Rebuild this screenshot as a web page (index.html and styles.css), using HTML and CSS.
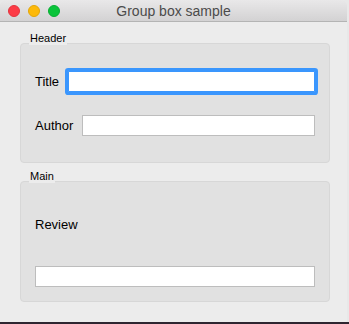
FILE: index.html
```html
<!DOCTYPE html>
<html lang="en">

<head>
  <meta charset="UTF-8">
  <title>Group box sample</title>
  <link rel="stylesheet" href="styles.css">
</head>

<body>
  <div class="window">
    <div class="titlebar">
      <div class="lights">
        <span class="light red"></span>
        <span class="light yellow"></span>
        <span class="light green"></span>
      </div>
      <div class="title">Group box sample</div>
    </div>

    <div class="content">
      <!-- Header group -->
      <div class="group">
        <div class="group-title">Header</div>
        <div class="group-box header-box">
          <div class="row">
            <label for="title" class="label">Title</label>
            <input type="text" id="title" class="field focused">
          </div>
          <div class="row">
            <label for="author" class="label">Author</label>
            <input type="text" id="author" class="field">
          </div>
        </div>
      </div>

      <!-- Main group -->
      <div class="group main-group">
        <div class="group-title">Main</div>
        <div class="group-box main-box">
          <label for="review" class="label review-label">Review</label>
          <input type="text" id="review" class="field">
        </div>
      </div>
    </div>
  </div>
</body>

</html>
```

FILE: styles.css
```css
html {
  background: linear-gradient(to bottom, #e8e8e8 322px, #2e2530 322px);
  min-height: 100%;
}

body {
  margin: 0;
  padding: 0;
  font-family: "Liberation Sans", Arial, sans-serif;
}

.window {
  width: 347px;
  height: 322px;
  background: #ececec;
  border-radius: 5px 5px 0 0;
  overflow: hidden;
  display: flex;
  flex-direction: column;
}

.titlebar {
  height: 21px;
  border-bottom: 1px solid #b4b4b4;
  background: linear-gradient(to bottom, #e9e8e9, #d3d2d3);
  display: grid;
  grid-template-columns: 1fr auto 1fr;
  align-items: center;
}

.lights {
  display: flex;
  gap: 8px;
  padding-left: 8px;
}

.light {
  width: 12px;
  height: 12px;
  border-radius: 50%;
  box-sizing: border-box;
}

.red {
  background: #fc3b46;
  border: 1px solid #e2343e;
}

.yellow {
  background: #fdb90a;
  border: 1px solid #e3a507;
}

.green {
  background: #0ac43a;
  border: 1px solid #08ad33;
}

.title {
  font-size: 14px;
  line-height: 21px;
  padding-top: 1px;
  color: #4b4b4b;
}

.content {
  padding: 10px 17px 0 20px;
  display: flex;
  flex-direction: column;
  gap: 7px;
}

.group {
  display: flex;
  flex-direction: column;
}

.group-title {
  align-self: flex-start;
  margin-left: 9px;
  padding: 0 1px;
  font-size: 11px;
  line-height: 13px;
  background: #ececec;
  color: #000;
  position: relative;
  z-index: 1;
}

.group-box {
  margin-top: -2px;
  background: #e1e1e1;
  border: 1px solid #d7d7d7;
  border-radius: 4px;
  padding: 0 14px;
  display: flex;
  flex-direction: column;
}

.header-box {
  padding-top: 27px;
  padding-bottom: 26px;
  gap: 23px;
}

.main-box {
  padding-top: 35px;
  padding-bottom: 14px;
  gap: 33px;
}

.row {
  display: flex;
  align-items: center;
  gap: 9px;
}

.label {
  font-size: 13px;
  line-height: 16px;
  color: #000;
}

.field {
  flex: 1;
  height: 21px;
  box-sizing: border-box;
  margin: 0;
  padding: 0 3px;
  border: 1px solid #bdbdbd;
  background: #fff;
  font-family: inherit;
  font-size: 13px;
  outline: none;
}

.field.focused {
  border-color: #3a96fd;
  box-shadow: 0 0 0 3px #3a96fd;
  border-radius: 1px;
}

.main-box .field {
  flex: none;
}
```
